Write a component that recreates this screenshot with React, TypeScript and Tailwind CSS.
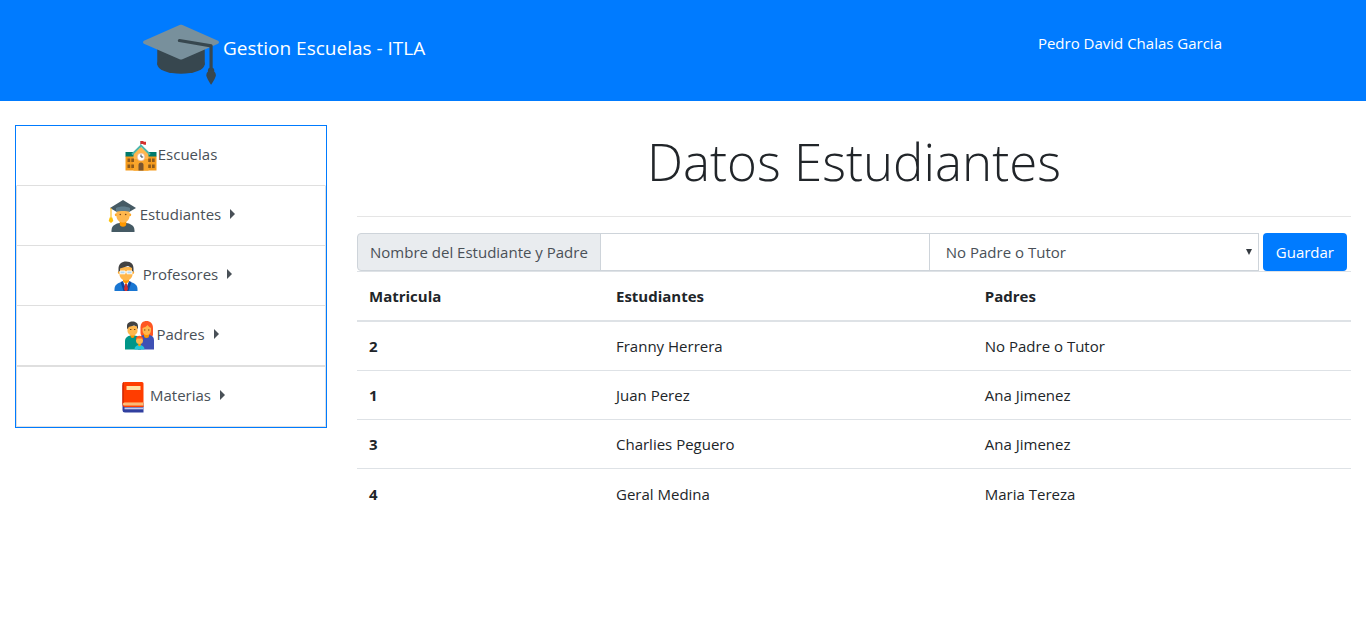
import { FcGraduationCap } from "react-icons/fc";
import type { ReactNode } from "react";

function SchoolIcon() {
  return (
    <svg className="h-8 w-8 shrink-0" viewBox="0 0 32 32" aria-hidden="true">
      <path d="M15.500 1v7" stroke="#90a4ae" strokeWidth="0.800" />
      <path d="M15.500 1h3v.7H21v3h-2.600v-.7h-2.900z" fill="#d32f2f" />
      <path d="M.5 16h31v14.500H.5z" fill="#f59b1c" />
      <path d="M.5 12h31v4.500H.5z" fill="#00796b" />
      <path d="M8.500 13.500 16 7l7.500 6.500v17h-15z" fill="#ffb74d" />
      <path d="M8.500 19h15v11.500h-15z" fill="#f9a52b" />
      <path d="M7 14.500 16 5.500l9 9" fill="none" stroke="#4db6ac" strokeWidth="1.900" />
      <circle cx="16" cy="17" r="3.900" fill="#fff" stroke="#e8a06a" strokeWidth="0.600" />
      <path d="M16 14.500V17h2.200" fill="none" stroke="#37474f" strokeWidth="1" />
      <path d="M13.500 30.500V25a2.500 2.500 0 0 1 5 0v5.500z" fill="#795530" />
      <path d="M2.500 18.500h2.700v3.500H2.500zm3.800 0H9v3.500H6.300zM2.500 24.500h2.700V28H2.500zm3.800 0H9V28H6.300zM23.200 18.500h2.700v3.500h-2.700zm3.800 0h2.700v3.500H27zM23.200 24.500h2.700V28h-2.700zm3.800 0h2.700V28H27z" fill="#8d5a1c" />
    </svg>
  );
}

function StudentIcon() {
  return (
    <svg className="h-8 w-8 shrink-0" viewBox="0 0 32 32" aria-hidden="true">
      <path d="M4.500 32v-1.500c0-5.500 5-7 8-7.500h7c3 .5 8 2 8 7.500V32z" fill="#455a64" />
      <path d="M12.700 20h6.600v3.500a3.300 3.300 0 0 1-6.600 0z" fill="#ff9800" />
      <circle cx="9.300" cy="14.800" r="1.500" fill="#ffa726" />
      <circle cx="22.700" cy="14.800" r="1.500" fill="#ffa726" />
      <path d="M9.500 9h13v7c0 4-3 6.500-6.500 6.500S9.500 20 9.500 16z" fill="#ffb74d" />
      <circle cx="13.300" cy="14.500" r=".8" fill="#784719" />
      <circle cx="18.700" cy="14.500" r=".8" fill="#784719" />
      <path d="M9 6h14v6c-4-1.200-10-1.200-14 0z" fill="#607d8b" />
      <path d="M3 8 16 0l13 8-6 3.500V8c-4-2-10-2-14 0v3.500z" fill="#455a64" />
      <path d="M4 8v10" stroke="#ffb300" strokeWidth="1" />
      <path d="M2.700 17.500h2.600l1 3.500L4 23l-2.300-2z" fill="#ffc107" />
    </svg>
  );
}

function TeacherIcon() {
  return (
    <svg className="h-8 w-8 shrink-0" viewBox="0 0 32 32" aria-hidden="true">
      <path d="M4.500 31v-2c0-5 5-6.500 8-7h7c3 .5 8 2 8 7v2z" fill="#1976d2" />
      <path d="m12 22 4 9 4-9z" fill="#fff" />
      <path d="m10.500 22 2.500-1 3 8 3-8 2.500 1-3 9h-5z" fill="#0d47a1" />
      <path d="M15 23.500h2l1 5.500-1 2h-2l-1-2z" fill="#d32f2f" />
      <path d="M13 18h6v3.500l-3 2.500-3-2.500z" fill="#ff9800" />
      <circle cx="9.500" cy="12.500" r="1.600" fill="#ffa726" />
      <circle cx="22.500" cy="12.500" r="1.600" fill="#ffa726" />
      <path d="M9.500 7h13v7c0 4-3 6.500-6.500 6.500S9.500 18 9.500 14z" fill="#ffb74d" />
      <path d="M8.500 12V8.500C8.500 4 12 1.500 16 1.500c5.500 0 7.500 3 7.500 7V12l-1.500-1V8l-4-2-8 2.500V11z" fill="#424242" />
      <path d="M10 11h5v2.800h-5zm7 0h5v2.800h-5z" fill="#b3d9f5" stroke="#fff" strokeWidth=".9" />
      <path d="M15 12h2" stroke="#fff" />
    </svg>
  );
}

function ParentsIcon() {
  return (
    <svg className="h-8 w-8 shrink-0" viewBox="0 0 32 32" aria-hidden="true">
      <path d="M17.500 13V7.500C17.500 3 20 1 23.500 1S30 3.500 30 8v7c0 1-2 1.500-4 1.500h-5c-2 0-3.500-1-3.500-3.500z" fill="#ff5722" />
      <path d="M15 29.500V20c0-3 3-4.500 6-5h5c3 .5 5 2 5 5v9.500z" fill="#3f51b5" />
      <path d="M21 13h5v2.500a2.500 2.500 0 0 1-5 0z" fill="#ff9800" />
      <path d="M19.500 8c2-.5 4-1.500 5-3 1 1.500 2.500 2.500 3.500 3v2.500c0 2.500-2 4.500-4.300 4.500s-4.200-2-4.200-4.500z" fill="#ffb74d" />
      <path d="M2 29.500V21c0-3.500 3-5 5.500-5.500h4C15 16 18 17.500 18 21v8.500z" fill="#009688" />
      <path d="M7.500 13h4v3a2 2 0 0 1-4 0z" fill="#ff9800" />
      <path d="M4.500 6h10v5c0 2.500-2.500 4.500-5 4.500s-5-2-5-4.500z" fill="#ffb74d" />
      <path d="M4 9V6c0-3 2.500-4.500 5.500-4.500S15 3 15 6v3l-1-1V6.500l-3-1L5.500 7v1z" fill="#424242" />
      <path d="M7 9.500h1.400m2.600 0h1.400M21 10h1.400m2.600 0h1.400" stroke="#784719" />
      <path d="M11.500 29.500c0-3 2-4.500 5-4.500s5 1.500 5 4.500z" fill="#26c6da" />
      <path d="M15.200 23.500h2.600V25a1.300 1.300 0 0 1-2.600 0z" fill="#ff9800" />
      <circle cx="16.500" cy="20.500" r="3.500" fill="#ffb74d" />
      <path d="M13 20c-.3-3 1.500-4.300 3.500-4.300S20.300 17 20 20l-1.200-1.500h-4.600z" fill="#ff5722" />
    </svg>
  );
}

function BookIcon() {
  return (
    <svg className="h-8 w-8 shrink-0" viewBox="0 0 32 32" aria-hidden="true">
      <path d="M5.500 4v25A2.500 2.500 0 0 0 8 31.500h18.500V22z" fill="#303f9f" />
      <path d="M8 1h17a1.500 1.500 0 0 1 1.500 1.500V26h-18c-1.500 0-3-.5-3-2.500v-21C5.500 2 6.500 1 8 1z" fill="#ff3d00" />
      <path d="M5.500 3.500C5.500 2 6 1.200 7 1v20.500c-1 .3-1.500 1-1.500 3z" fill="#dd2c00" />
      <path d="M9.500 5h14v4h-14z" fill="#ffe0a3" />
      <path d="M7.500 21.500h19v3h-19a1.500 1.500 0 0 1 0-3z" fill="#ffcc80" />
      <path d="M7.500 26.500h19v1.800h-19z" fill="#c5cae9" />
      <path d="M7.500 23h19" stroke="#ef9a6a" strokeWidth=".7" />
    </svg>
  );
}

function MenuItem({ icon, label, caret }: { icon: ReactNode; label: string; caret?: boolean }) {
  return (
    <li className="h-15 border-x border-b border-[#dfdfdf] first:border-x-transparent last:h-[61px] last:border-t">
      <a href="#" className="flex h-full items-center justify-center gap-px text-[#495057]">
        {icon}
        <span className="pb-1">{label}</span>
        {caret && (
          <svg className="mb-1 ml-2 h-[10px] w-[5px]" viewBox="0 0 5 10" aria-hidden="true">
            <path d="M0 0l5 5-5 5z" fill="#495057" />
          </svg>
        )}
      </a>
    </li>
  );
}

const students = [
  { id: 2, name: "Franny Herrera", parent: "No Padre o Tutor" },
  { id: 1, name: "Juan Perez", parent: "Ana Jimenez" },
  { id: 3, name: "Charlies Peguero", parent: "Ana Jimenez" },
  { id: 4, name: "Geral Medina", parent: "Maria Tereza" },
];

export default function App() {
  return (
    <div className="min-h-screen bg-white font-['Open_Sans','Noto_Sans',sans-serif] text-[15px] leading-6 text-[#212529]">
      <header className="flex h-[101px] items-start justify-between bg-[#007bff] pr-36 pl-[143px] text-white">
        <a href="#" className="flex items-center pt-3">
          <FcGraduationCap className="h-[76px] w-[76px]" />
          <span className="ml-1 pb-1 text-[19px]">Gestion Escuelas - ITLA</span>
        </a>
        <a href="#" className="mt-[31px]">Pedro David Chalas Garcia</a>
      </header>

      <div className="flex gap-[30px] px-[15px] pt-6">
        <nav className="w-[312px] shrink-0 self-start border border-[#007bff]">
          <ul>
            <MenuItem icon={<SchoolIcon />} label="Escuelas" />
            <MenuItem icon={<StudentIcon />} label="Estudiantes" caret />
            <MenuItem icon={<TeacherIcon />} label="Profesores" caret />
            <MenuItem icon={<ParentsIcon />} label="Padres" caret />
            <MenuItem icon={<BookIcon />} label="Materias" caret />
          </ul>
        </nav>

        <main className="min-w-0 flex-1">
          <h1 className="h-[91px] text-center text-[51px] leading-[72px] font-light">Datos Estudiantes</h1>
          <form className="flex h-[55px] border-t border-[#e5e5e5] pt-4 pr-1" onSubmit={(e) => e.preventDefault()}>
            <label
              htmlFor="student"
              className="flex items-center rounded-l border border-[#ced4da] bg-[#e9ecef] px-3 whitespace-nowrap text-[#495057]"
            >
              Nombre del Estudiante y Padre
            </label>
            <div className="-ml-px flex w-0 flex-1">
              <input id="student" type="text" className="w-full border border-[#ced4da] px-3 outline-none" />
            </div>
            <div className="relative -ml-px flex w-0 flex-1">
              <select
                aria-label="Padre o Tutor"
                className="w-full appearance-none border border-[#ced4da] bg-white px-4 text-[#495057] outline-none"
              >
                <option>No Padre o Tutor</option>
                <option>Ana Jimenez</option>
                <option>Maria Tereza</option>
              </select>
              <svg className="pointer-events-none absolute top-4 right-[7px] h-[6px] w-[6px]" viewBox="0 0 6 6" aria-hidden="true">
                <path d="M0 0h6L3 6z" fill="#343a40" />
              </svg>
            </div>
            <button type="submit" className="ml-1 rounded bg-[#007bff] px-[13px] text-white">
              Guardar
            </button>
          </form>

          <table className="w-full table-fixed border-separate border-spacing-0 text-left">
            <colgroup>
              <col className="w-[24.85%]" />
              <col className="w-[37.1%]" />
              <col />
            </colgroup>
            <thead>
              <tr>
                <th className="h-[51px] border-t border-b-2 border-[#dee2e6] px-3 font-bold">Matricula</th>
                <th className="h-[51px] border-t border-b-2 border-[#dee2e6] px-3 font-bold">Estudiantes</th>
                <th className="h-[51px] border-t border-b-2 border-[#dee2e6] px-3 font-bold">Padres</th>
              </tr>
            </thead>
            <tbody>
              {students.map((s) => (
                <tr key={s.id} className="group">
                  <th className="h-[49px] border-b border-[#dee2e6] px-3 font-bold group-last:border-b-0">{s.id}</th>
                  <td className="h-[49px] border-b border-[#dee2e6] px-3 group-last:border-b-0">{s.name}</td>
                  <td className="h-[49px] border-b border-[#dee2e6] px-3 group-last:border-b-0">{s.parent}</td>
                </tr>
              ))}
            </tbody>
          </table>
        </main>
      </div>
    </div>
  );
}
